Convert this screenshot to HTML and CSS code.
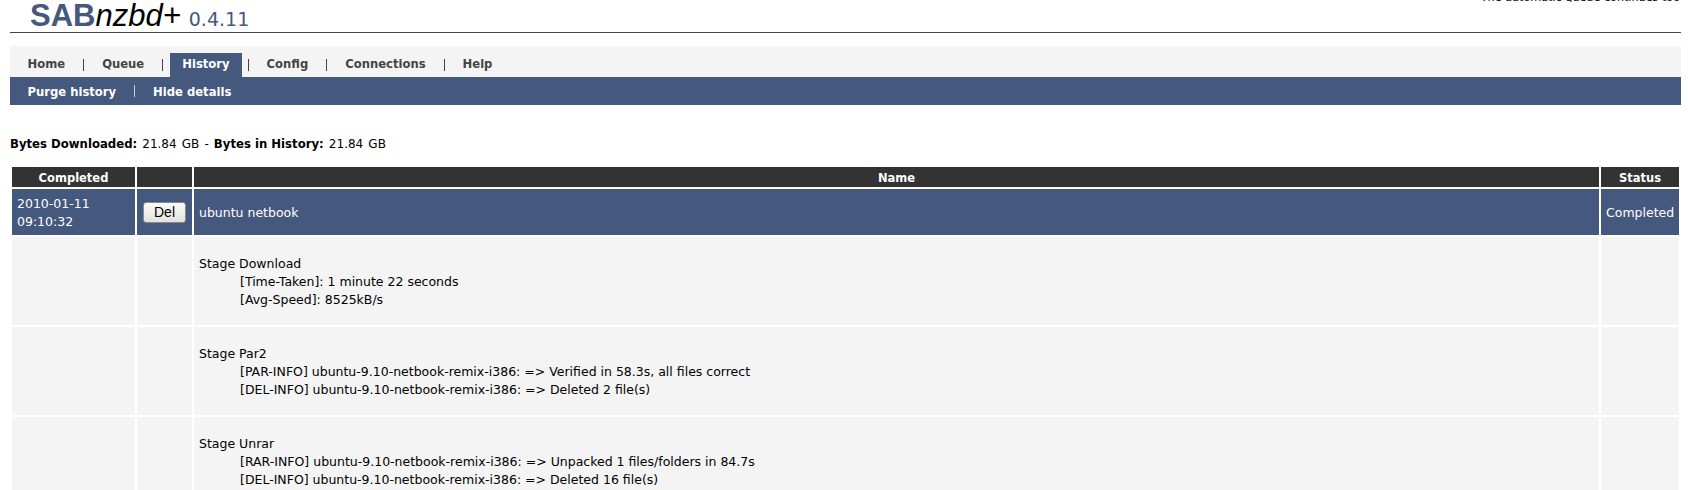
FILE: index.html
```html
<!DOCTYPE html>
<html lang="en">
<head>
  <meta charset="UTF-8">
  <title>SABnzbd+ 0.4.11 - History</title>
  <link rel="stylesheet" href="styles.css">
</head>
<body>
  <div class="top-note">The automatic queue continues too</div>
  <div class="header">
    <span class="logo"><b>SAB</b><i>nzbd+</i></span>
    <span class="version">0.4.11</span>
  </div>

  <ul class="menu">
    <li><a href="#">Home</a></li>
    <li class="sep"></li>
    <li><a href="#">Queue</a></li>
    <li class="sep"></li>
    <li class="active"><a href="#">History</a></li>
    <li class="sep"></li>
    <li><a href="#">Config</a></li>
    <li class="sep"></li>
    <li><a href="#">Connections</a></li>
    <li class="sep"></li>
    <li><a href="#">Help</a></li>
  </ul>
  <ul class="submenu">
    <li><a href="#">Purge history</a></li>
    <li class="sep"></li>
    <li><a href="#">Hide details</a></li>
  </ul>

  <p class="stats"><b>Bytes Downloaded:</b> 21.84 GB - <b>Bytes in History:</b> 21.84 GB</p>

  <table class="history">
    <colgroup>
      <col class="col-date">
      <col class="col-del">
      <col>
      <col class="col-status">
    </colgroup>
    <tr>
      <th>Completed</th>
      <th></th>
      <th>Name</th>
      <th>Status</th>
    </tr>
    <tr class="entry">
      <td>2010-01-11<br>09:10:32</td>
      <td class="del"><button>Del</button></td>
      <td>ubuntu netbook</td>
      <td>Completed</td>
    </tr>
    <tr class="stage">
      <td></td>
      <td></td>
      <td>
        Stage Download
        <div class="log">[Time-Taken]: 1 minute 22 seconds</div>
        <div class="log">[Avg-Speed]: 8525kB/s</div>
      </td>
      <td></td>
    </tr>
    <tr class="stage">
      <td></td>
      <td></td>
      <td>
        Stage Par2
        <div class="log">[PAR-INFO] ubuntu-9.10-netbook-remix-i386: =&gt; Verified in 58.3s, all files correct</div>
        <div class="log">[DEL-INFO] ubuntu-9.10-netbook-remix-i386: =&gt; Deleted 2 file(s)</div>
      </td>
      <td></td>
    </tr>
    <tr class="stage">
      <td></td>
      <td></td>
      <td>
        Stage Unrar
        <div class="log">[RAR-INFO] ubuntu-9.10-netbook-remix-i386: =&gt; Unpacked 1 files/folders in 84.7s</div>
        <div class="log">[DEL-INFO] ubuntu-9.10-netbook-remix-i386: =&gt; Deleted 16 file(s)</div>
      </td>
      <td></td>
    </tr>
  </table>
</body>
</html>
```
FILE: styles.css
```css
:root {
  --blue: #45587d;
  --light: #f4f4f4;
  --dark: #333333;
}

* {
  box-sizing: border-box;
}

html, body {
  height: 490px;
  overflow: hidden;
}

body {
  margin: 0;
  padding: 0 7px 0 10px;
  background: #fff;
  color: #000;
  font-family: "DejaVu Sans", Verdana, sans-serif;
  font-size: 12.5px;
}

a {
  color: inherit;
  text-decoration: none;
}

.top-note {
  height: 2px;
  overflow: hidden;
  display: flex;
  justify-content: flex-end;
  align-items: flex-end;
  padding-right: 1px;
  font-size: 11.2px;
  line-height: 9px;
}

.header {
  height: 31px;
  padding-left: 20px;
  border-bottom: 1px solid #444;
  display: flex;
  align-items: baseline;
  line-height: 27px;
  gap: 8px;
}

.logo {
  font-family: "Liberation Sans", Arial, sans-serif;
  font-size: 31px;
}

.logo b {
  color: var(--blue);
}

.version {
  color: var(--blue);
  font-size: 19px;
}

.menu, .submenu {
  list-style: none;
  margin: 0;
  display: flex;
  font-weight: bold;
  font-size: 11.6px;
}

.menu {
  margin-top: 13px;
  height: 31px;
  padding: 7px 0 0 17.5px;
  background: var(--light);
  color: #444;
  line-height: 22px;
}

.submenu {
  height: 28px;
  padding: 0 0 0 17.5px;
  background: var(--blue);
  color: #fff;
  line-height: 30px;
}

.sep {
  width: 1px;
  height: 12px;
  margin: 0 18px;
  align-self: center;
  background: #4a3a5a;
}

.menu .sep:has(+ .active) {
  margin-right: 7px;
}

.menu .active {
  padding: 0 12px;
  background: var(--blue);
  color: #fff;
}

.menu .active + .sep {
  margin-left: 6px;
}

.submenu .sep {
  background: #c8ccd6;
}

.stats {
  margin: 31px 0 0;
  height: 29px;
  font-size: 12px;
  line-height: 16px;
  word-spacing: 1.3px;
}

.stats b {
  font-size: 11.7px;
  word-spacing: 0;
}

.history {
  width: 100%;
  table-layout: fixed;
  border-collapse: separate;
  border-spacing: 2px;
}

.col-date {
  width: 123px;
}

.col-del {
  width: 55px;
}

.col-status {
  width: 78px;
}

.history th {
  height: 20px;
  padding: 1px 0 0;
  background: var(--dark);
  color: #fff;
  font-size: 11.5px;
  text-align: center;
}

.history td {
  padding: 1px 5px 0;
  vertical-align: middle;
  line-height: 18px;
}

.entry td {
  height: 46px;
  background: var(--blue);
  color: #fff;
}

.entry td.del {
  padding: 0;
  text-align: center;
}

.entry button {
  display: block;
  width: 43px;
  height: 21px;
  margin: 0 auto;
  padding: 0;
  border: 1px solid #8a8a8a;
  border-radius: 3px;
  background: linear-gradient(#fbfbfb, #e4e2dc);
  color: #000;
  font-family: "Liberation Sans", Arial, sans-serif;
  font-size: 14px;
}

.stage td {
  height: 88px;
  background: var(--light);
}

.log {
  padding-left: 41px;
}
```
